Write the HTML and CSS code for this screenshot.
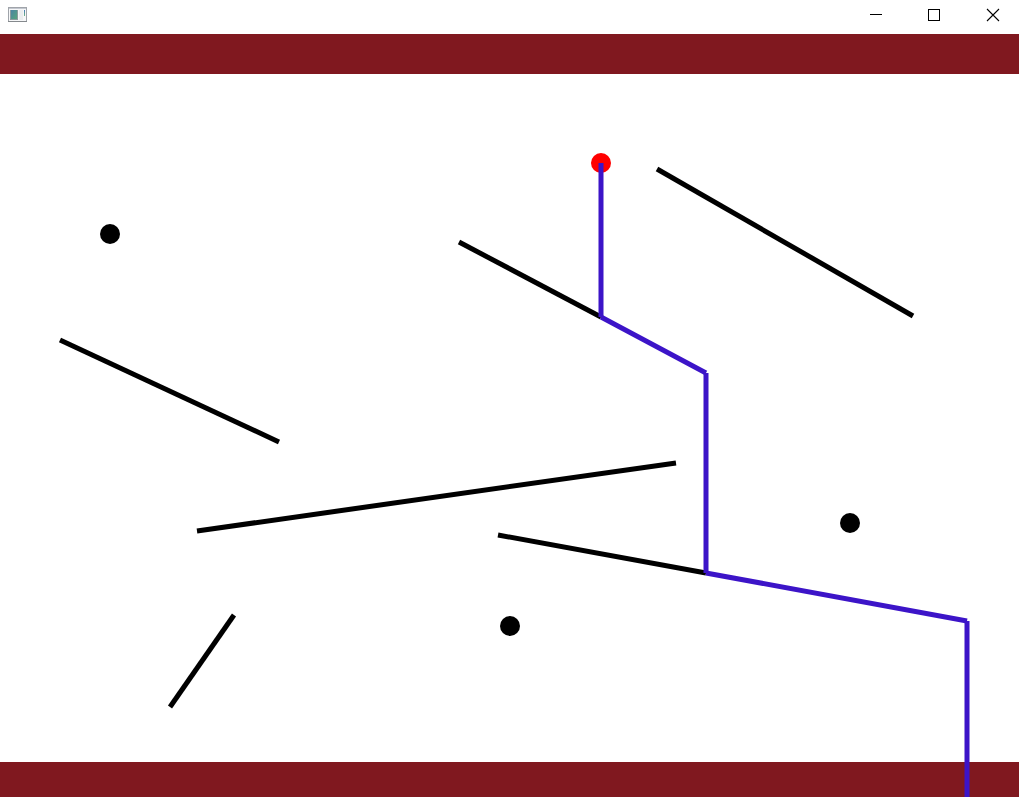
FILE: index.html
```html
<!DOCTYPE html>
<html lang="en">
<head>
<meta charset="utf-8">
<title>Window</title>
<meta name="viewport" content="width=device-width, initial-scale=1">
<link rel="stylesheet" href="styles.css">
</head>
<body>
<header class="titlebar">
  <svg class="app-icon" width="20" height="16" viewBox="0 0 20 16" aria-hidden="true">
    <defs>
      <linearGradient id="pane" x1="0" y1="0" x2="1" y2="1"><stop offset="0" stop-color="#4b83a4"/><stop offset="1" stop-color="#55a57c"/></linearGradient>
      <linearGradient id="strip" x1="0" y1="0" x2="0" y2="1"><stop offset="0" stop-color="#4778b8"/><stop offset="1" stop-color="#70b583"/></linearGradient>
    </defs>
    <rect x="0.5" y="0.5" width="18" height="14" fill="#f6f7f8" stroke="#a0a4aa"/>
    <rect x="1" y="1" width="17" height="1" fill="#c3c7cf"/>
    <rect x="0" y="14" width="19" height="1" fill="#85898d"/>
    <rect x="2" y="3" width="8" height="10" fill="#8b9a9e"/>
    <rect x="3" y="3" width="6" height="9" fill="url(#pane)"/>
    <rect x="11" y="3" width="4" height="10" fill="#ebedef"/>
    <rect x="16" y="3" width="1" height="6" fill="url(#strip)"/>
  </svg>
  <div class="controls">
    <button class="control" type="button" aria-label="Minimize"><svg width="14" height="14" viewBox="0 0 14 14"><path d="M2 6.5H14" stroke="#000"/></svg></button>
    <button class="control" type="button" aria-label="Maximize"><svg width="14" height="14" viewBox="0 0 14 14"><rect x="1.5" y="1.5" width="11" height="11" fill="none" stroke="#000"/></svg></button>
    <button class="control" type="button" aria-label="Close"><svg width="14" height="14" viewBox="0 0 14 14"><path d="M1 1L13 13M13 1L1 13" stroke="#000" stroke-width="1.1"/></svg></button>
  </div>
</header>
<main class="scene">
  <div class="wall wall-top"></div>
  <div class="wall wall-bottom"></div>
  <svg class="field" viewBox="0 34 1019 763" preserveAspectRatio="none" role="img" aria-label="Ball path over sloped lines">
    <g stroke="#000" stroke-width="5">
      <path d="M657 169L913 316"/>
      <path d="M459 242L601 317"/>
      <path d="M60 340L279 442"/>
      <path d="M197 531L676 463"/>
      <path d="M498 535L706 573"/>
      <path d="M170 707L234 615"/>
    </g>
    <circle cx="110" cy="234" r="10"/>
    <circle cx="850" cy="523" r="10"/>
    <circle cx="510" cy="626" r="10"/>
    <circle cx="601" cy="163" r="10" fill="#f00"/>
    <g stroke="#3c14c8" stroke-width="5">
      <path d="M601 163V317"/>
      <path d="M601 317L706 373"/>
      <path d="M706 373V573"/>
      <path d="M706 573L967 621"/>
      <path d="M967 621V797"/>
    </g>
  </svg>
</main>
</body>
</html>
```
FILE: styles.css
```css
* {
  box-sizing: border-box;
}

body {
  margin: 0;
  min-height: 100vh;
  display: flex;
  flex-direction: column;
  background: #fff;
  font-family: "Liberation Sans", sans-serif;
}

.titlebar {
  display: flex;
  justify-content: space-between;
  align-items: flex-start;
  height: 34px;
}

.app-icon {
  margin: 7px 0 0 8px;
}

.controls {
  display: flex;
  gap: 7px;
}

.control {
  display: flex;
  align-items: center;
  justify-content: center;
  width: 52px;
  height: 30px;
  padding: 0;
  border: 0;
  background: transparent;
}

.scene {
  position: relative;
  flex: 1;
  display: flex;
  flex-direction: column;
  justify-content: space-between;
}

.wall {
  background: #80181f;
}

.wall-top {
  height: 40px;
}

.wall-bottom {
  height: 35px;
}

.field {
  position: absolute;
  inset: 0;
  width: 100%;
  height: 100%;
}
```
